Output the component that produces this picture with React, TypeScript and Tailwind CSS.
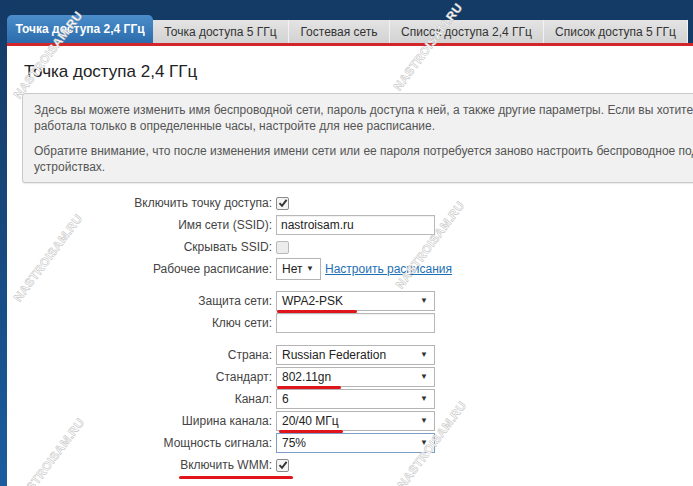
import React from "react";

const Check = ({ checked }: { checked: boolean }) => (
  <span
    className={
      "relative inline-flex h-[13px] w-[13px] items-center justify-center rounded-[2px] border " +
      (checked ? "border-[#8a8a8a] bg-[#f4f4f4]" : "border-[#b9b9b9] bg-[#ececec]")
    }
  >
    {checked && (
      <svg width="10" height="10" viewBox="0 0 10 10">
        <path d="M1.5 5.2 L4 7.8 L8.6 1.8" fill="none" stroke="#333" strokeWidth="1.9" />
      </svg>
    )}
  </span>
);

const Select = ({
  value,
  w = "w-[159px]",
  focus = false,
  mark,
}: {
  value: string;
  w?: string;
  focus?: boolean;
  mark?: string;
}) => (
  <div
    className={
      "relative flex h-[20px] items-center justify-between border bg-white pl-[5px] pr-[6px] " +
      w +
      (focus ? " border-[#7f9cc4]" : " border-[#b4b4b4]")
    }
  >
    <span className="text-[12px] text-[#222]">{value}</span>
    <span className="text-[8px] text-[#333]">▼</span>
    {mark && <span className={"absolute bottom-[-3px] left-0 h-[3px] rounded-full bg-[#e0141b] " + mark} />}
  </div>
);

const Input = ({ value }: { value: string }) => (
  <div className="flex h-[20px] w-[159px] items-center border border-[#b8b8b8] bg-white pl-[4px] text-[12px] text-[#222] shadow-[inset_0_1px_1px_rgba(0,0,0,0.06)]">
    {value}
  </div>
);

const Row = ({ label, children, labelMark }: { label: string; children: React.ReactNode; labelMark?: boolean }) => (
  <div className="flex h-[22px] items-center">
    <div className="relative w-[269px] pr-[4px] text-right text-[12px] text-[#444]">
      {label}
      {labelMark && <span className="absolute bottom-[-5px] right-[-17px] h-[3px] w-[114px] rounded-full bg-[#e0141b]" />}
    </div>
    {children}
  </div>
);

const Watermark = ({ x, y }: { x: number; y: number }) => (
  <div
    className="pointer-events-none absolute -translate-x-1/2 -translate-y-1/2 -rotate-[53deg] whitespace-nowrap font-['Liberation_Sans',sans-serif] text-[12px] font-bold tracking-[0.3px] text-white [-webkit-text-stroke:0.5px_#bdbdbd]"
    style={{ left: x, top: y }}
  >
    NASTROISAM.RU
  </div>
);

export default function App() {
  const tabs = [
    { t: "Точка доступа 5 ГГц", w: "w-[136px]" },
    { t: "Гостевая сеть", w: "w-[101px]" },
    { t: "Список доступа 2,4 ГГц", w: "w-[154px]" },
    { t: "Список доступа 5 ГГц", w: "w-[144px]" },
  ];
  return (
    <div className="relative h-[486px] w-[693px] overflow-hidden bg-white font-['Liberation_Sans',Arial,sans-serif]">
      <div className="flex h-full">
        <div className="h-full w-[7px] shrink-0 bg-gradient-to-b from-[#143a66] via-[#17497f] to-[#1b5da0]" />
        <div className="flex min-w-0 flex-1 flex-col">
          <div className="flex h-[43px] items-end bg-[#143a66]">
            <div className="flex h-[28px] w-[146px] items-center justify-center rounded-t-[5px] bg-gradient-to-b from-[#4b8dca] to-[#2c6cac] text-[12px] font-bold text-white">
              Точка доступа 2,4 ГГц
            </div>
            {tabs.map((tab) => (
              <div
                key={tab.t}
                className={
                  "flex h-[23px] items-center justify-center border-r border-[#f2f2f2] bg-gradient-to-b from-[#e4e4e4] to-[#d2d2d2] text-[12px] text-[#333] " +
                  tab.w
                }
              >
                {tab.t}
              </div>
            ))}
          </div>
          <div className="h-[3px] bg-[#d2262b]" />
          <div className="flex-1 bg-white">
            <div className="pl-[17px] pt-[15px] text-[17px] leading-[22px] text-[#222]">Точка доступа 2,4 ГГц</div>
            <div className="ml-[15px] mt-[10px] w-[760px] rounded-[3px] border border-[#c9c9c9] bg-[#f1f1f1] pb-[7px] pl-[11px] pt-[8px] text-[12px] leading-[16px] text-[#555] shadow-[0_1px_1px_rgba(0,0,0,0.08)]">
              <p className="whitespace-nowrap">
                Здесь вы можете изменить имя беспроводной сети, пароль доступа к ней, а также другие параметры. Если вы хотите, чтобы сеть
                <br />
                работала только в определенные часы, настройте для нее расписание.
              </p>
              <p className="mt-[9px] whitespace-nowrap">
                Обратите внимание, что после изменения имени сети или ее пароля потребуется заново настроить беспроводное подключение на
                <br />
                устройствах.
              </p>
            </div>
            <div className="mt-[9px]">
              <Row label="Включить точку доступа:">
                <Check checked />
              </Row>
              <Row label="Имя сети (SSID):">
                <Input value="nastroisam.ru" />
              </Row>
              <Row label="Скрывать SSID:">
                <Check checked={false} />
              </Row>
              <Row label="Рабочее расписание:">
                <div className="flex h-[22px] w-[45px] items-center justify-between border border-[#b4b4b4] bg-white pl-[5px] pr-[6px]">
                  <span className="text-[12px] text-[#222]">Нет</span>
                  <span className="text-[8px] text-[#333]">▼</span>
                </div>
                <a className="ml-[4px] text-[12px] text-[#1e6fb3] underline">Настроить расписания</a>
              </Row>
              <div className="h-[10px]" />
              <Row label="Защита сети:">
                <Select value="WPA2-PSK" mark="w-[80px]" />
              </Row>
              <Row label="Ключ сети:">
                <Input value="" />
              </Row>
              <div className="h-[10px]" />
              <Row label="Страна:">
                <Select value="Russian Federation" />
              </Row>
              <Row label="Стандарт:">
                <Select value="802.11gn" mark="w-[64px]" />
              </Row>
              <Row label="Канал:">
                <Select value="6" />
              </Row>
              <Row label="Ширина канала:">
                <Select value="20/40 МГц" mark="left-[2px] w-[64px]" />
              </Row>
              <Row label="Мощность сигнала:">
                <Select value="75%" focus />
              </Row>
              <Row label="Включить WMM:" labelMark>
                <Check checked />
              </Row>
            </div>
          </div>
        </div>
      </div>
      <Watermark x={48} y={55} />
      <Watermark x={48} y={258} />
      <Watermark x={50} y={462} />
      <Watermark x={428} y={47} />
      <Watermark x={430} y={245} />
      <Watermark x={432} y={445} />
    </div>
  );
}
